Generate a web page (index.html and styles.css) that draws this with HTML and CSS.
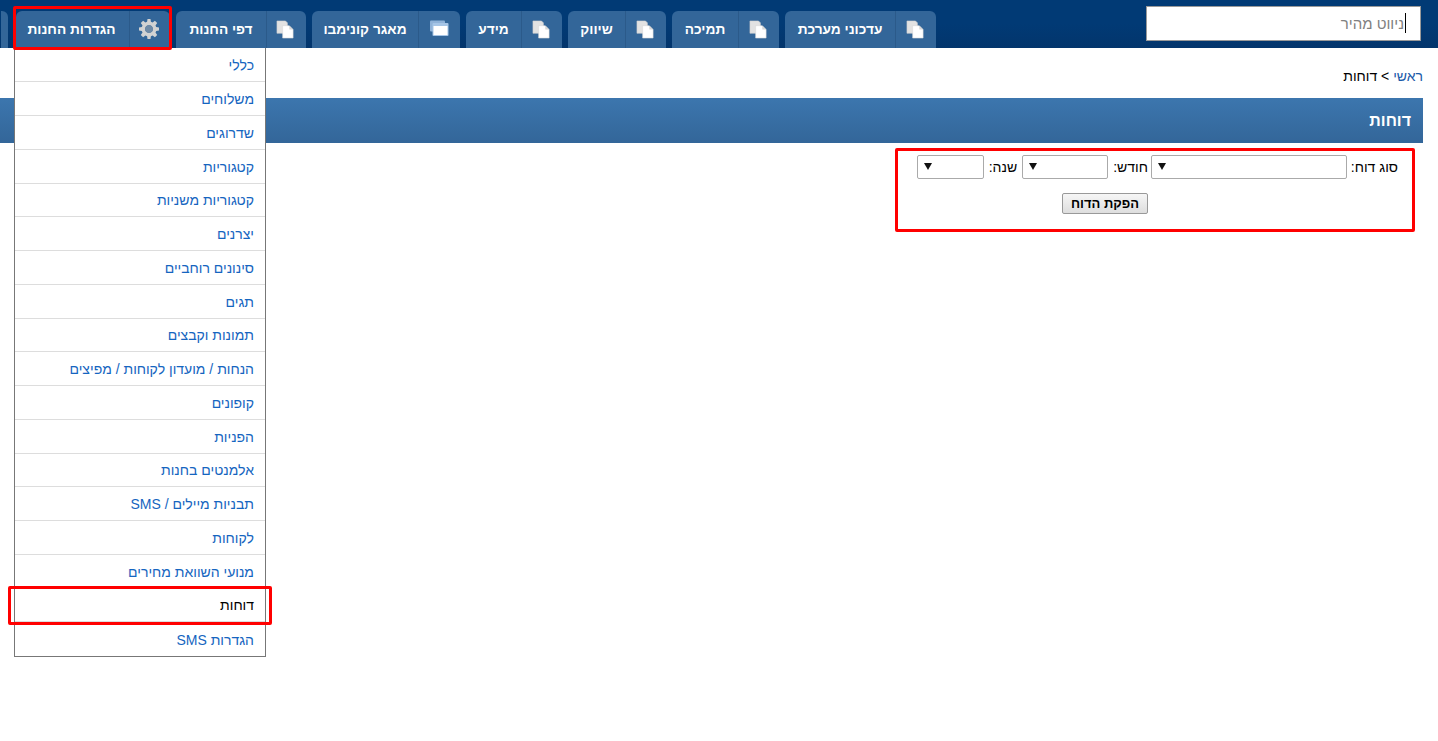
FILE: index.html
```html
<!DOCTYPE html>
<html lang="he" dir="rtl">
<head>
<meta charset="utf-8">
<title>דוחות</title>
<link rel="stylesheet" href="styles.css">
</head>
<body>
<svg class="defs" width="0" height="0" aria-hidden="true">
  <defs>
    <symbol id="copy" viewBox="0 0 20 20">
      <path d="M1 1h9l2 2v11H1z" fill="#e2e2e2" stroke="#cfcfcf" stroke-width=".6"/>
      <path d="M7 6h7l4 4v9H7z" fill="#fff" stroke="#d8d8d8" stroke-width=".6"/>
      <path d="M14 6v4h4z" fill="#d6d6d6"/>
    </symbol>
    <symbol id="windows" viewBox="0 0 20 18">
      <rect x="1" y=".5" width="15" height="11" rx="1" fill="#8fb2d8"/>
      <rect x="3.500" y="3" width="16" height="13" rx="1" fill="#a6c5e6"/>
      <rect x="4.500" y="6" width="14" height="9" fill="#fff"/>
    </symbol>
    <symbol id="gear" viewBox="0 0 20 20">
      <path fill="#d2d2d2" fill-rule="evenodd" d="M8.500 0h3l.4 2.800 1.700.7L15.900 1.800 18.200 4.100 16.500 6.400l.7 1.700 2.800.4v3l-2.800.4-.7 1.700 1.700 2.300-2.300 2.300-2.300-1.700-1.700.7-.4 2.800h-3l-.4-2.800-1.700-.7-2.300 1.700-2.300-2.300 1.700-2.300-.7-1.700L0 11.500v-3l2.800-.4.7-1.700L1.800 4.100 4.100 1.800 6.400 3.500l1.700-.7zM10 6.200a3.800 3.800 0 1 0 0 7.600 3.800 3.800 0 0 0 0-7.600z"/>
      <circle cx="10" cy="10" r="3.800" fill="#6f8aa6"/>
    </symbol>
  </defs>
</svg>

<header class="topbar">
  <div class="search">
    <input class="search-input" type="text" placeholder="ניווט מהיר">
    <span class="caret"></span>
  </div>
  <nav class="tabs">
    <a class="tab tab-updates"><span class="tab-icon"><svg class="ico-copy"><use href="#copy"/></svg></span><span class="tab-label">עדכוני מערכת</span></a>
    <a class="tab tab-support"><span class="tab-icon"><svg class="ico-copy"><use href="#copy"/></svg></span><span class="tab-label">תמיכה</span></a>
    <a class="tab tab-market"><span class="tab-icon"><svg class="ico-copy"><use href="#copy"/></svg></span><span class="tab-label">שיווק</span></a>
    <a class="tab tab-info"><span class="tab-icon"><svg class="ico-copy"><use href="#copy"/></svg></span><span class="tab-label">מידע</span></a>
    <a class="tab tab-db"><span class="tab-icon"><svg class="ico-win"><use href="#windows"/></svg></span><span class="tab-label">מאגר קונימבו</span></a>
    <a class="tab tab-pages"><span class="tab-icon"><svg class="ico-copy"><use href="#copy"/></svg></span><span class="tab-label">דפי החנות</span></a>
    <a class="tab tab-settings"><span class="tab-icon"><svg class="ico-gear"><use href="#gear"/></svg></span><span class="tab-label">הגדרות החנות</span></a>
    <span class="tab tab-clipped"></span>
  </nav>
</header>

<main class="content">
  <div class="breadcrumb"><a class="crumb-link">ראשי</a> &gt; דוחות</div>
  <h1 class="title">דוחות</h1>
  <form class="report-form">
    <div class="form-row">
      <label class="field-label label-type">סוג דוח:</label>
      <span class="select-wrap w-type"><select class="select"></select><svg class="arrow" viewBox="0 0 8 7"><path d="M0 0h8L4 7z"/></svg></span>
      <label class="field-label label-month">חודש:</label>
      <span class="select-wrap w-month"><select class="select"></select><svg class="arrow" viewBox="0 0 8 7"><path d="M0 0h8L4 7z"/></svg></span>
      <label class="field-label label-year">שנה:</label>
      <span class="select-wrap w-year"><select class="select"></select><svg class="arrow" viewBox="0 0 8 7"><path d="M0 0h8L4 7z"/></svg></span>
    </div>
    <div class="form-actions"><button class="submit" type="button">הפקת הדוח</button></div>
  </form>
</main>

<ul class="menu">
  <li class="menu-item"><a>כללי</a></li>
  <li class="menu-item"><a>משלוחים</a></li>
  <li class="menu-item"><a>שדרוגים</a></li>
  <li class="menu-item"><a>קטגוריות</a></li>
  <li class="menu-item"><a>קטגוריות משניות</a></li>
  <li class="menu-item"><a>יצרנים</a></li>
  <li class="menu-item"><a>סינונים רוחביים</a></li>
  <li class="menu-item"><a>תגים</a></li>
  <li class="menu-item"><a>תמונות וקבצים</a></li>
  <li class="menu-item"><a>הנחות / מועדון לקוחות / מפיצים</a></li>
  <li class="menu-item"><a>קופונים</a></li>
  <li class="menu-item"><a>הפניות</a></li>
  <li class="menu-item"><a>אלמנטים בחנות</a></li>
  <li class="menu-item"><a>תבניות מיילים / SMS</a></li>
  <li class="menu-item"><a>לקוחות</a></li>
  <li class="menu-item"><a>מנועי השוואת מחירים</a></li>
  <li class="menu-item is-current"><a>דוחות</a></li>
  <li class="menu-item"><a>הגדרות SMS</a></li>
</ul>

<div class="mark mark-tab"></div>
<div class="mark mark-form"></div>
<div class="mark mark-item"></div>
</body>
</html>
```
FILE: styles.css
```css
* { box-sizing: border-box; }
html, body { margin: 0; padding: 0; }
body {
  font-family: "Liberation Sans", Arial, sans-serif;
  font-size: 14px;
  color: #000;
  background: #fff;
  overflow: hidden;
  height: 741px;
  position: relative;
}
.defs { position: absolute; }

/* top bar */
.topbar {
  height: 48px;
  background: linear-gradient(#013a75, #013a75 50%, #03356c);
  display: flex;
  align-items: flex-start;
  padding-right: 17px;
  overflow: hidden;
}
.search { position: relative; width: 275px; height: 35px; margin-top: 6px; margin-left: 210px; flex: none; }
.search-input {
  width: 100%;
  height: 100%;
  border: 1px solid #999;
  background: #fff;
  padding: 0 16px 0 4px;
  font: 15px "Liberation Sans", Arial, sans-serif;
  direction: rtl;
  outline: none;
}
.search-input::placeholder { color: #808080; opacity: 1; }
.caret { position: absolute; right: 15px; top: 7px; width: 1px; height: 20px; background: #000; }

.tabs { display: flex; gap: 6px; margin-top: 11px; flex: none; }
.tab {
  height: 37px;
  display: flex;
  align-items: center;
  background: #336699;
  color: #fff;
  font-size: 13.7px;
  font-weight: bold;
  border-radius: 6px 6px 0 0;
  flex: none;
}
.tab-icon {
  height: 100%;
  display: flex;
  align-items: center;
  justify-content: center;
  border-left: 1px solid #2b5a8a;
  flex: none;
}
.tab-label { flex: 1; text-align: center; white-space: nowrap; }
.ico-copy { width: 19px; height: 19px; margin-right: 2px; margin-top: -1px; }
.ico-win { width: 20px; height: 18px; margin-right: 2px; margin-top: -1px; }
.ico-gear { width: 20px; height: 20px; margin-right: 2px; margin-top: -1px; }

.tab-updates { width: 151px; } .tab-updates .tab-icon { width: 41px; }
.tab-support { width: 107px; } .tab-support .tab-icon { width: 41px; }
.tab-market { width: 98px; } .tab-market .tab-icon { width: 41px; }
.tab-info { width: 96px; } .tab-info .tab-icon { width: 41px; }
.tab-db { width: 148px; } .tab-db .tab-icon { width: 42px; }
.tab-pages { width: 130px; } .tab-pages .tab-icon { width: 40px; }
.tab-settings { width: 154px; } .tab-settings .tab-icon { width: 41px; }
.tab-settings .tab-label { padding-right: 2px; }
.tab-clipped { width: 7px; margin-right: 2px; border-radius: 0 6px 0 0; }

/* content */
.breadcrumb { height: 50px; padding: 20px 15px 0 0; line-height: 16px; font-size: 14px; }
.crumb-link { color: #1a5aa8; }
.title {
  margin: 0 15px 0 0;
  height: 45px;
  line-height: 45px;
  font-size: 16px;
  font-weight: bold;
  color: #fff;
  padding-right: 12px;
  background: linear-gradient(#3c76ae, #336699);
}
.report-form { padding: 12px 40px 0 0; }
.form-row { display: flex; align-items: center; height: 24px; }
.field-label { white-space: nowrap; font-size: 14px; }
.label-type { padding: 0 0 0 4px; }
.label-month { padding: 0 3px 0 5px; }
.label-year { padding: 0 5px 0 5px; }
.select-wrap { position: relative; display: block; height: 24px; flex: none; }
.w-type { width: 196px; }
.w-month { width: 86px; }
.w-year { width: 67px; }
.select {
  appearance: none;
  -webkit-appearance: none;
  display: block;
  width: 100%;
  height: 100%;
  border: 1px solid #aaa;
  border-radius: 2px;
  background: #fff;
}
.arrow { position: absolute; left: 7px; top: 8px; width: 8px; height: 7px; fill: #111; pointer-events: none; }
.form-actions { padding: 14px 250px 0 0; }
.submit {
  display: block;
  width: 86px;
  height: 21px;
  padding: 0;
  font: bold 13px "Liberation Sans", Arial, sans-serif;
  color: #000;
  border: 1px solid #999;
  border-radius: 2px;
  background: linear-gradient(#f6f6f6, #dedede);
}

/* dropdown menu */
.menu {
  position: absolute;
  left: 14px;
  top: 48px;
  width: 252px;
  margin: 0;
  padding: 0.5px 0 0;
  list-style: none;
  background: #fff;
  border: 1px solid #777;
  border-top: 0;
}
.menu-item {
  height: 33.75px;
  display: flex;
  align-items: center;
  border-bottom: 1px solid #ddd;
  padding: 1px 11px 0;
  color: #1565c0;
  font-size: 14px;
}
.menu-item:last-child { border-bottom: 0; }
.is-current { color: #000; }

/* annotation rectangles */
.mark { position: absolute; border: 3px solid #f00; border-radius: 2px; pointer-events: none; }
.mark-tab { left: 13px; top: 6px; width: 159px; height: 44px; }
.mark-form { left: 895px; top: 148px; width: 520px; height: 84px; }
.mark-item { left: 8px; top: 586px; width: 264px; height: 39px; }
```
